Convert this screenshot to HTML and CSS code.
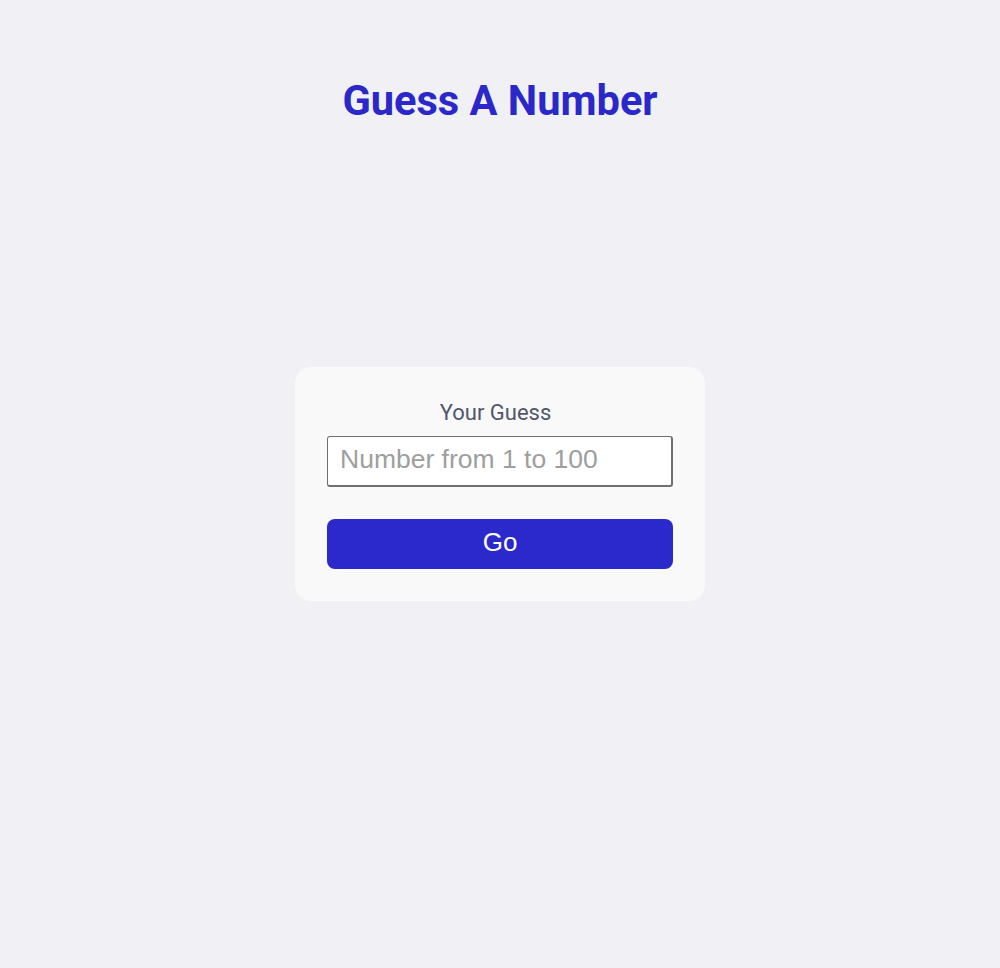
FILE: index.html
```html
<!DOCTYPE html>
<html lang="en">
<head>
<meta charset="utf-8">
<title>Guess A Number</title>
<link rel="stylesheet" href="styles.css">
</head>
<body>
<header class="top">
  <h1 class="title">Guess A Number</h1>
</header>
<main class="card">
  <form class="guess-form" onsubmit="return false;">
    <label class="label" for="guess">Your Guess</label>
    <input class="input" id="guess" type="number" placeholder="Number from 1 to 100">
    <button class="btn" type="submit">Go</button>
  </form>
</main>
<div class="spacer"></div>
</body>
</html>
```
FILE: styles.css
```css
html, body {
  margin: 0;
  padding: 0;
}
body {
  min-height: 100vh;
  background: #f0f0f5;
  font-family: Roboto, "Liberation Sans", sans-serif;
  display: grid;
  grid-template-rows: 1fr auto 1fr;
  justify-items: center;
}
.top {
  align-self: start;
  padding-top: 76px;
}
.title {
  margin: 0;
  font-size: 41.6px;
  font-weight: 700;
  color: #2a28c9;
  text-align: center;
}
.card {
  width: 346px;
  padding: 32px;
  background: #f9f9fa;
  border-radius: 16px;
}
.guess-form {
  display: flex;
  flex-direction: column;
  align-items: stretch;
}
.label {
  text-align: center;
  font-size: 22px;
  line-height: 26px;
  color: #52566a;
  margin-bottom: 11px;
  padding-right: 9px;
  padding-top: 1px;
}
.input {
  box-sizing: border-box;
  height: 51px;
  padding: 0 12px 4px 12px;
  border-style: solid;
  border-color: #6f6f6f;
  border-width: 1px 2px 2px 1px;
  border-radius: 3px;
  background: #fff;
  font-family: "Liberation Sans", Arial, sans-serif;
  font-size: 26.5px;
  color: #222;
  margin: -1px 0 32px 0;
}
.input::placeholder {
  color: #9e9e9e;
}
.btn {
  height: 50px;
  padding: 0 0 4px 0;
  border: none;
  border-radius: 8px;
  background: #2b29cc;
  color: #fff;
  font-family: "Liberation Sans", Arial, sans-serif;
  font-size: 26px;
  cursor: pointer;
}
```
